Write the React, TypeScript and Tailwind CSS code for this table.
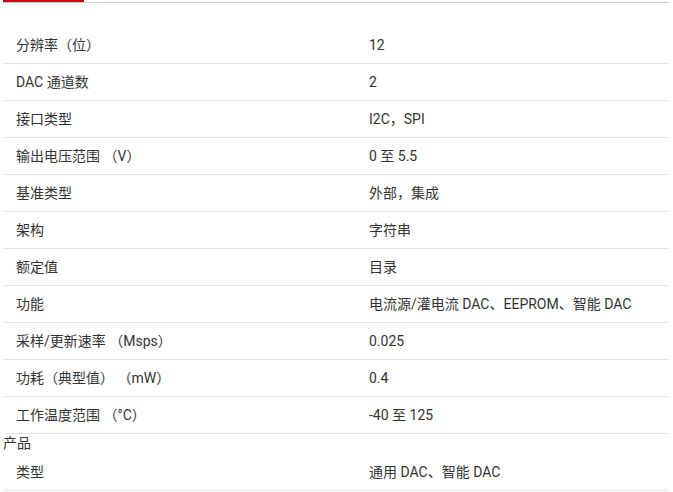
import React from "react";

const rows: [string, string][] = [
  ["分辨率（位）", "12"],
  ["DAC 通道数", "2"],
  ["接口类型", "I2C，SPI"],
  ["输出电压范围 （V）", "0 至 5.5"],
  ["基准类型", "外部，集成"],
  ["架构", "字符串"],
  ["额定值", "目录"],
  ["功能", "电流源/灌电流 DAC、EEPROM、智能 DAC"],
  ["采样/更新速率 （Msps）", "0.025"],
  ["功耗（典型值） （mW）", "0.4"],
  ["工作温度范围 （°C）", "-40 至 125"],
];

function Row({ label, value }: { label: string; value: string }) {
  return (
    <div className="flex h-[37px] items-center border-b border-[#e5e5e5]">
      <div className="w-[353px] pl-[13px]">{label}</div>
      <div className="flex-1 pl-[13px]">{value}</div>
    </div>
  );
}

export default function App() {
  return (
    <div
      className="h-[492px] w-[673px] overflow-hidden bg-white text-[14px] text-[#333]"
      style={{ fontFamily: 'Roboto, "Noto Sans CJK SC", sans-serif' }}
    >
      <div className="ml-[3px] mr-[4px] flex h-[3px] items-start border-b border-[#cccccc]">
        <div className="h-[2px] w-[81px] bg-[#cc0000]" />
      </div>
      <div className="mx-[3px] mt-[24px] w-[666px]">
        {rows.map(([l, v]) => (
          <Row key={l} label={l} value={v} />
        ))}
        <div className="h-[20px] leading-[18px]">产品</div>
        <Row label="类型" value="通用 DAC、智能 DAC" />
      </div>
    </div>
  );
}
